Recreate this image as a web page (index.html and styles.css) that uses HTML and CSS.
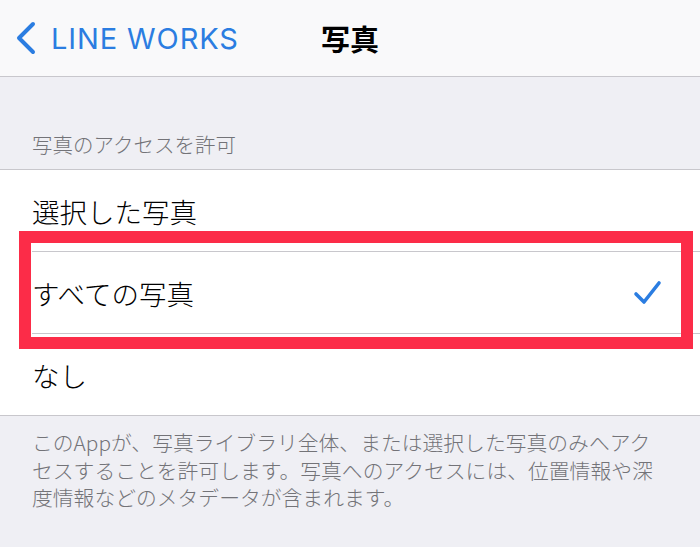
FILE: index.html
```html
<!DOCTYPE html>
<html lang="ja">
<head>
<meta charset="utf-8">
<link rel="stylesheet" href="styles.css">
</head>
<body>
<div class="screen">
  <header class="nav">
    <div class="back">
      <svg class="chev" width="24" height="34" viewBox="0 0 24 34"><path d="M19 3 L5 17 L19 31" fill="none" stroke="#2b7de1" stroke-width="4" stroke-linecap="round" stroke-linejoin="round"/></svg>
      <span class="back-label">LINE WORKS</span>
    </div>
    <div class="title">写真</div>
  </header>
  <div class="section-head">写真のアクセスを許可</div>
  <ul class="list">
    <li class="row">選択した写真</li>
    <li class="row">すべての写真
      <svg class="check" width="30" height="26" viewBox="0 0 30 26"><path d="M4 14 L12 22 L27 3" fill="none" stroke="#2b7de1" stroke-width="3.6" stroke-linecap="round" stroke-linejoin="round"/></svg>
    </li>
    <li class="row">なし</li>
  </ul>
  <p class="foot">このAppが、写真ライブラリ全体、または選択した写真のみへアクセスすることを許可します。写真へのアクセスには、位置情報や深度情報などのメタデータが含まれます。</p>
  <div class="highlight"></div>
</div>
</body>
</html>
```
FILE: styles.css
```css
html, body {
  margin: 0;
  padding: 0;
}
body {
  background: #efeff4;
  font-family: "Noto Sans CJK JP", "Noto Sans", sans-serif;
  width: 700px;
  height: 547px;
  overflow: hidden;
}
.screen {
  position: relative;
  width: 700px;
  height: 547px;
}
.nav {
  height: 76px;
  background: #f9f9fa;
  border-bottom: 1px solid #c8c7cc;
  display: flex;
  align-items: center;
  position: relative;
}
.back {
  display: flex;
  align-items: center;
  padding-left: 14px;
  gap: 13px;
  color: #2b7de1;
}
.back-label {
  font-family: "Inter", "Noto Sans", sans-serif;
  font-size: 29px;
  letter-spacing: 0.9px;
  line-height: 1;
}
.title {
  position: absolute;
  left: 0;
  right: 0;
  top: 0;
  bottom: 0;
  display: flex;
  align-items: center;
  justify-content: center;
  font-size: 29px;
  font-weight: 700;
  color: #000;
  pointer-events: none;
}
.section-head {
  padding: 53px 0 0 32px;
  height: 39px;
  font-size: 20.5px;
  line-height: 28px;
  color: #737378;
  font-weight: 300;
}
.list {
  list-style: none;
  margin: 0;
  padding: 0;
  background: #fff;
  border-top: 1px solid #c8c7cc;
  border-bottom: 1px solid #c8c7cc;
}
.row {
  height: 81px;
  margin-left: 32px;
  padding-right: 38px;
  display: flex;
  align-items: center;
  justify-content: space-between;
  font-size: 27.5px;
  font-weight: 300;
  color: #000;
  border-bottom: 1px solid #c8c7cc;
}
.row:last-child {
  border-bottom: none;
}
.check {
  display: block;
}
.foot {
  margin: 0;
  padding: 13px 30px 0 32px;
  font-size: 20.8px;
  line-height: 27.5px;
  font-weight: 300;
  color: #737378;
}
.highlight {
  position: absolute;
  left: 19px;
  top: 231px;
  width: 650px;
  height: 94px;
  border: 12px solid #fc2c48;
}
```
